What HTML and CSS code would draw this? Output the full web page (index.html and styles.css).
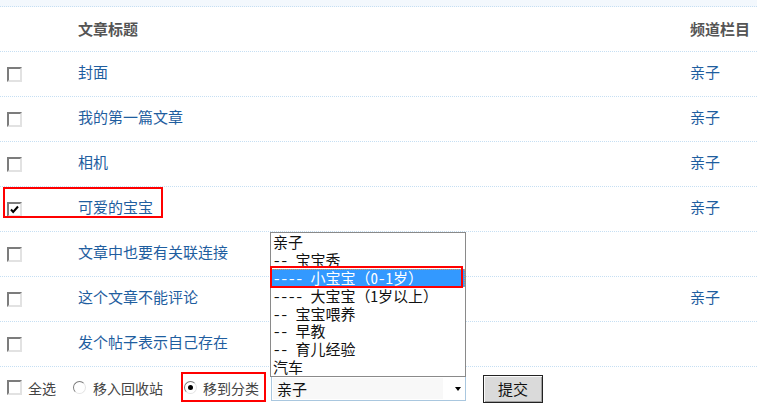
FILE: index.html
```html
<!DOCTYPE html>
<html lang="zh">
<head>
<meta charset="utf-8">
<title>文章列表</title>
<link rel="stylesheet" href="styles.css">
</head>
<body>
<div class="page">
  <div class="top"></div>
  <div class="row head"><div class="c1"></div><div class="c2">文章标题</div><div class="c3">频道栏目</div></div>
  <div class="row"><div class="c1"><span class="cb"></span></div><div class="c2"><a>封面</a></div><div class="c3"><a>亲子</a></div></div>
  <div class="row"><div class="c1"><span class="cb"></span></div><div class="c2"><a>我的第一篇文章</a></div><div class="c3"><a>亲子</a></div></div>
  <div class="row"><div class="c1"><span class="cb"></span></div><div class="c2"><a>相机</a></div><div class="c3"><a>亲子</a></div></div>
  <div class="row"><div class="c1"><span class="cb on"><svg viewBox="0 0 15 15" width="15" height="15"><path d="M4 7.5 L6.2 10 L11 4.5" fill="none" stroke="#000" stroke-width="2"/></svg></span></div><div class="c2"><a>可爱的宝宝</a></div><div class="c3"><a>亲子</a></div></div>
  <div class="row"><div class="c1"><span class="cb"></span></div><div class="c2"><a>文章中也要有关联连接</a></div><div class="c3"></div></div>
  <div class="row"><div class="c1"><span class="cb"></span></div><div class="c2"><a>这个文章不能评论</a></div><div class="c3"><a>亲子</a></div></div>
  <div class="row"><div class="c1"><span class="cb"></span></div><div class="c2"><a>发个帖子表示自己存在</a></div><div class="c3"></div></div>
  <div class="foot">
    <span class="cb"></span><span class="lbl lbl-all">全选</span>
    <span class="rd"></span><span class="lbl lbl-bin">移入回收站</span>
    <span class="rd on"></span><span class="lbl lbl-move">移到分类</span>
    <span class="sel"><span class="sel-val">亲子</span><span class="sel-arrow"></span></span>
    <span class="btn">提交</span>
  </div>

  <div class="listbox">
    <div class="opt">亲子</div>
    <div class="opt"><span class="hw">-- </span>宝宝秀</div>
    <div class="opt active"><span class="hw">---- </span>小宝宝（<span class="hw">0-1</span>岁）</div>
    <div class="opt"><span class="hw">---- </span>大宝宝（<span class="hw">1</span>岁以上）</div>
    <div class="opt"><span class="hw">-- </span>宝宝喂养</div>
    <div class="opt"><span class="hw">-- </span>早教</div>
    <div class="opt"><span class="hw">-- </span>育儿经验</div>
    <div class="opt">汽车</div>
  </div>

  <div class="mark mark-row"></div>
  <div class="mark mark-opt"></div>
  <div class="mark mark-move"></div>
</div>
</body>
</html>
```

FILE: styles.css
```css
html, body {
  margin: 0;
  padding: 0;
  background: #fff;
}
body {
  font-family: "Noto Sans CJK SC", "Noto Sans", sans-serif;
  font-size: 15px;
  color: #333;
  overflow: hidden;
}
.page {
  position: relative;
  width: 757px;
  height: 408px;
  overflow: hidden;
}
.top {
  height: 6px;
  background: #f3f8fd;
  border-bottom: 1px dotted #c6dff3;
}
.row {
  display: grid;
  grid-template-columns: 78px 612px 1fr;
  align-items: center;
  height: 44px;
  border-bottom: 1px dotted #c6dff3;
  line-height: 20px;
}
.row .c2, .row .c3 {
  padding-bottom: 5px;
}
.c1 {
  padding-left: 7px;
  display: flex;
  align-items: center;
}
.head {
  font-weight: bold;
  color: #555;
}
.head .c2, .head .c3 {
  padding-bottom: 0;
}
.row a {
  color: #1f5e9f;
  text-decoration: none;
}
.cb {
  display: inline-block;
  flex: none;
  box-sizing: border-box;
  width: 15px;
  height: 15px;
  background: #fff;
  border-style: solid;
  border-width: 2px;
  border-color: #7c7c7c #e2e2e2 #e2e2e2 #7c7c7c;
  position: relative;
}
.cb svg {
  position: absolute;
  left: -2px;
  top: -2px;
}
.foot {
  display: flex;
  align-items: center;
  height: 41px;
  padding-left: 7px;
  color: #444;
  font-size: 14px;
}
.lbl {
  line-height: 20px;
  flex: none;
}
.lbl-all { margin-left: 6px; margin-right: 17px; }
.lbl-bin { margin-left: 7px; margin-right: 21px; }
.lbl-move { margin-left: 6px; margin-right: 12px; }
.rd {
  display: inline-block;
  flex: none;
  box-sizing: border-box;
  width: 13px;
  height: 13px;
  border-radius: 50%;
  border: 1px solid;
  border-color: #7c7c7c #e4e4e4 #e4e4e4 #7c7c7c;
  background: #fff;
  position: relative;
}
.rd.on::after {
  content: "";
  position: absolute;
  left: 3px;
  top: 3px;
  width: 5px;
  height: 5px;
  border-radius: 50%;
  background: #000;
}
.sel {
  display: flex;
  flex: none;
  align-items: center;
  box-sizing: border-box;
  width: 195px;
  height: 25px;
  border: 1px solid #a9c7df;
  background: #fff;
  padding: 1px;
  margin-top: 2px;
  color: #111;
  font-size: 15px;
}
.sel-val {
  flex: none;
  width: 170px;
  height: 21px;
  line-height: 21px;
  padding-left: 4px;
  box-sizing: border-box;
  background: #f8f8f8;
}
.sel-arrow {
  margin-left: 12px;
  width: 0;
  height: 0;
  border-left: 3.5px solid transparent;
  border-right: 3.5px solid transparent;
  border-top: 4px solid #000;
}
.btn {
  display: inline-flex;
  flex: none;
  align-items: center;
  justify-content: center;
  box-sizing: border-box;
  width: 60px;
  height: 28px;
  margin-left: 17px;
  margin-top: 2px;
  background: #dadada;
  border: 1px solid #222;
  box-shadow: inset 1px 1px #fafafa, inset -1px -1px #a0a0a0;
  color: #111;
  font-size: 15px;
}
.listbox {
  position: absolute;
  left: 270px;
  top: 232px;
  width: 196px;
  height: 145px;
  box-sizing: border-box;
  border: 1px solid #8a8a8a;
  background: #fff;
  overflow: hidden;
  font-size: 15px;
  color: #111;
}
.opt {
  height: 17.9px;
  line-height: 18px;
  padding-left: 2px;
  white-space: pre;
}
.hw {
  font-feature-settings: "hwid" 1;
}
.opt.active {
  background: #3399ff;
  color: #fff;
  outline: 1px dotted #d9a05a;
  outline-offset: -1px;
}
.mark {
  position: absolute;
  box-sizing: border-box;
  border: 2px solid #ff0000;
}
.mark-row { left: 3px; top: 187px; width: 160px; height: 31px; }
.mark-opt { left: 270px; top: 266px; width: 193px; height: 22px; }
.mark-move { left: 181px; top: 372px; width: 85px; height: 30px; }
```
